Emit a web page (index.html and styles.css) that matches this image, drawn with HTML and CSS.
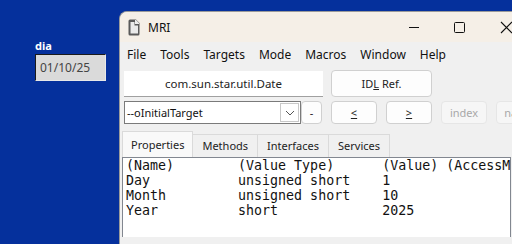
FILE: index.html
```html
<!DOCTYPE html>
<html lang="en">
<head>
    <meta charset="UTF-8">
    <title>MRI</title>
    <link rel="stylesheet" href="styles.css">
</head>
<body>
    <div class="desktop">
        <div class="form-field">
            <label class="field-label">dia</label>
            <div class="date-box">01/10/25</div>
        </div>
    </div>

    <div class="window">
        <div class="titlebar">
            <svg class="app-icon" width="12" height="17" viewBox="0 0 12 17">
                <path d="M2 0.5 H8 L11.5 4 V15 a1.5 1.5 0 0 1 -1.5 1.5 H2 a1.5 1.5 0 0 1 -1.5 -1.5 V2 a1.5 1.5 0 0 1 1.5 -1.5 Z" fill="#5a5a5a"/>
                <path d="M7 1 H8 L11 4 V5 H7 Z" fill="#ececec"/>
                <path d="M2.5 3 H6.5 V6.5 H10 V14.5 H2.5 Z" fill="#fafafa" opacity="0.9"/>
            </svg>
            <span class="title">MRI</span>
            <div class="caption-buttons">
                <svg width="46" height="30" viewBox="0 0 46 30"><path d="M18 15.5 H28" stroke="#111" stroke-width="1"/></svg>
                <svg width="46" height="30" viewBox="0 0 46 30"><rect x="17.5" y="10.5" width="10" height="10" rx="1" fill="none" stroke="#111"/></svg>
                <svg width="46" height="30" viewBox="0 0 46 30"><path d="M18 10 L29 21 M29 10 L18 21" stroke="#111" stroke-width="1.1"/></svg>
            </div>
        </div>
        <div class="menubar">
            <span>File</span>
            <span>Tools</span>
            <span>Targets</span>
            <span>Mode</span>
            <span>Macros</span>
            <span>Window</span>
            <span>Help</span>
        </div>
        <div class="content">
            <div class="row">
                <div class="type-field">com.sun.star.util.Date</div>
                <button class="btn btn-idl">ID<u>L</u> Ref.</button>
            </div>
            <div class="row row-nav">
                <div class="combo">
                    <span>--oInitialTarget</span>
                    <span class="combo-arrow">
                        <svg width="10" height="6" viewBox="0 0 10 6"><path d="M1 1 L5 5 L9 1" fill="none" stroke="#555" stroke-width="1"/></svg>
                    </span>
                </div>
                <button class="btn btn-small">-</button>
                <button class="btn btn-nav"><u>&lt;</u></button>
                <button class="btn btn-nav"><u>&gt;</u></button>
                <button class="btn btn-nav btn-disabled">index</button>
                <button class="btn btn-nav btn-disabled">name</button>
            </div>
            <div class="tabs">
                <div class="tab active">Properties</div>
                <div class="tab">Methods</div>
                <div class="tab">Interfaces</div>
                <div class="tab">Services</div>
            </div>
            <div class="panel">
<pre class="listing">(Name)        (Value Type)      (Value) (AccessMode)
Day           unsigned short    1
Month         unsigned short    10
Year          short             2025</pre>
            </div>
        </div>
    </div>
</body>
</html>
```

FILE: styles.css
```css
html, body {
    margin: 0;
    padding: 0;
    width: 100%;
    height: 100%;
    overflow: hidden;
}

body {
    background: #05309c;
    font-family: 'Noto Sans', 'Open Sans', sans-serif;
    position: relative;
}

.desktop {
    padding: 40px 0 0 35px;
}

.form-field {
    display: flex;
    flex-direction: column;
    gap: 3px;
}

.field-label {
    color: #fff;
    font-size: 11px;
    font-weight: bold;
    line-height: 11px;
}

.date-box {
    box-sizing: border-box;
    width: 71px;
    height: 27px;
    background: #dadada;
    border: 1px solid #1a1a1a;
    border-right-color: #e8e8e8;
    border-bottom-color: #e8e8e8;
    color: #444;
    font-size: 12px;
    line-height: 25px;
    padding-left: 4px;
}

.window {
    box-sizing: border-box;
    position: absolute;
    left: 119px;
    top: 11px;
    width: 393px;
    height: 233px;
    background: #f0f0f0;
    border: 1px solid #9a9a9a;
    border-right: none;
    border-bottom: none;
    border-radius: 8px 0 0 0;
    overflow: hidden;
}

.titlebar {
    height: 30px;
    background: #f5efe7;
    display: flex;
    align-items: center;
    padding-left: 8px;
}

.app-icon {
    margin-top: 1px;
}

.title {
    margin-left: 8px;
    font-size: 12px;
    color: #111;
}

.caption-buttons {
    margin-left: auto;
    display: flex;
    margin-right: -17px;
}

.caption-buttons svg {
    display: block;
    flex-shrink: 0;
}

.menubar {
    height: 24px;
    display: flex;
    align-items: center;
    font-size: 12px;
    color: #111;
}

.menubar span {
    padding: 0 7px;
}

.content {
    padding: 4px 0 0 4px;
}

.row {
    display: flex;
    gap: 8px;
    align-items: center;
}

.type-field {
    box-sizing: border-box;
    flex-shrink: 0;
    width: 199px;
    height: 26px;
    background: #fff;
    border-bottom: 1px solid #a0a0a0;
    font-size: 11.5px;
    text-align: center;
    line-height: 25px;
    color: #222;
}

.btn {
    box-sizing: border-box;
    flex-shrink: 0;
    background: #fdfdfd;
    border: 1px solid #d0d0d0;
    border-radius: 4px;
    font-family: inherit;
    font-size: 11px;
    color: #222;
    padding: 0;
}

.btn-idl {
    width: 101px;
    height: 27px;
}

.row-nav {
    margin-top: 4px;
    gap: 9px;
}

.combo {
    box-sizing: border-box;
    flex-shrink: 0;
    width: 177px;
    height: 23px;
    background: #fff;
    border: 1px solid #7a7a7a;
    display: flex;
    align-items: center;
    padding-left: 2px;
    font-size: 11px;
    color: #111;
    margin-right: -9px;
}

.combo-arrow {
    margin-left: auto;
    box-sizing: border-box;
    width: 19px;
    height: 19px;
    margin-right: 1px;
    border: 1px solid #c8c8c8;
    display: flex;
    align-items: center;
    justify-content: center;
}

.btn-small {
    width: 21px;
    height: 23px;
}

.btn-nav {
    width: 46px;
    height: 23px;
}

.btn-disabled {
    background: #f6f6f6;
    border-color: #e6e6e6;
    color: #a8a8a8;
}

.tabs {
    display: flex;
    align-items: flex-end;
    margin-top: 7px;
    margin-left: -2px;
    height: 26px;
}

.tab {
    box-sizing: border-box;
    height: 23px;
    padding: 0 9px;
    border: 1px solid #dadada;
    border-bottom: none;
    margin-left: -1px;
    font-size: 11px;
    line-height: 21px;
    color: #222;
    background: #f0f0f0;
}

.tab.active {
    height: 26px;
    background: #f9f9f9;
    padding: 0 8px;
    margin-left: 0;
    line-height: 26px;
}

.panel {
    box-sizing: border-box;
    margin-left: -2px;
    width: 389px;
    height: 80px;
    background: #fff;
    border: 1px solid #828790;
    border-bottom: none;
    overflow: hidden;
}

.listing {
    margin: 0;
    padding: 0 0 0 3px;
    font-family: 'DejaVu Sans Mono', monospace;
    font-size: 13.3px;
    line-height: 15px;
    color: #111;
    white-space: pre;
}
```
